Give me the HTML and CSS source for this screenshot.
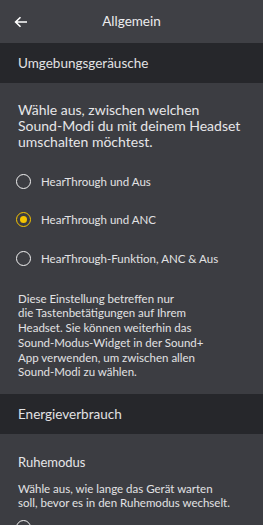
FILE: index.html
```html
<!DOCTYPE html>
<html lang="de">
<head>
<meta charset="utf-8">
<link rel="stylesheet" href="styles.css">
</head>
<body>
<div class="app">
  <header class="topbar">
    <svg class="back" width="14" height="12" viewBox="0 0 14 12"><path d="M13 6H1.8M6.5 1.2L1.6 6l4.9 4.8" fill="none" stroke="#fff" stroke-width="1.6"/></svg>
    <div class="title">Allgemein</div>
  </header>
  <div class="band">Umgebungsgeräusche</div>
  <section class="content">
    <p class="lead">Wähle aus, zwischen welchen<br>Sound-Modi du mit deinem Headset<br>umschalten möchtest.</p>
    <ul class="radios">
      <li class="radio"><span class="dot"></span>HearThrough und Aus</li>
      <li class="radio on"><span class="dot"></span>HearThrough und ANC</li>
      <li class="radio"><span class="dot"></span>HearThrough-Funktion, ANC &amp; Aus</li>
    </ul>
    <p class="note">Diese Einstellung betreffen nur<br>die Tastenbetätigungen auf Ihrem<br>Headset. Sie können weiterhin das<br>Sound-Modus-Widget in der Sound+<br>App verwenden, um zwischen allen<br>Sound-Modi zu wählen.</p>
  </section>
  <div class="band">Energieverbrauch</div>
  <section class="content second">
    <h2 class="sub">Ruhemodus</h2>
    <p class="note small">Wähle aus, wie lange das Gerät warten<br>soll, bevor es in den Ruhemodus wechselt.</p>
    <div class="radio last"><span class="dot"></span></div>
  </section>
</div>
</body>
</html>
```
FILE: styles.css
```css
* { box-sizing: border-box; }
html, body { margin: 0; padding: 0; }
body {
  background: #3c3d42;
  font-family: "Lato", "Open Sans", sans-serif;
  color: #e6e6e8;
  width: 263px;
  height: 525px;
  overflow: hidden;
}
.app { display: flex; flex-direction: column; }
.topbar {
  height: 43px;
  background: #3f4045;
  display: flex;
  align-items: center;
  position: relative;
}
.back { position: absolute; left: 14px; top: 16px; }
.title {
  flex: 1;
  text-align: center;
  font-size: 13.5px;
  color: #ececee;
  padding-bottom: 1px;
}
.band {
  height: 40px;
  background: #26272b;
  display: flex;
  align-items: center;
  padding-left: 18px;
  font-size: 13.5px;
  color: #e2e2e4;
}
.content {
  padding: 19px 18px 14px 18px;
}
.lead {
  margin: 0;
  font-size: 14px;
  line-height: 16px;
  color: #e6e6e8;
  white-space: nowrap;
}
.radios { list-style: none; margin: 12px 0 0 0; padding: 0; }
.radio {
  height: 38.5px;
  display: flex;
  align-items: center;
  font-size: 11.5px;
  color: #e2e2e4;
}
.dot {
  width: 15px;
  height: 15px;
  border: 1.6px solid #f2f2f2;
  border-radius: 50%;
  margin-left: -2px;
  margin-right: 10px;
  flex: none;
  display: flex;
  align-items: center;
  justify-content: center;
}
.radio.on .dot { border-color: #f5c400; }
.radio.on .dot::after {
  content: "";
  width: 7px; height: 7px;
  border-radius: 50%;
  background: #f5c400;
}
.note {
  margin: 14px 0 0 0;
  font-size: 11.5px;
  line-height: 14.8px;
  color: #e2e2e4;
  white-space: nowrap;
}
.second { padding-top: 20px; }
.sub {
  margin: 0;
  font-weight: normal;
  font-size: 13px;
  color: #e6e6e8;
}
.note.small { margin-top: 12px; line-height: 14px; }
.radio.last { height: auto; margin-top: 10px; }
```
